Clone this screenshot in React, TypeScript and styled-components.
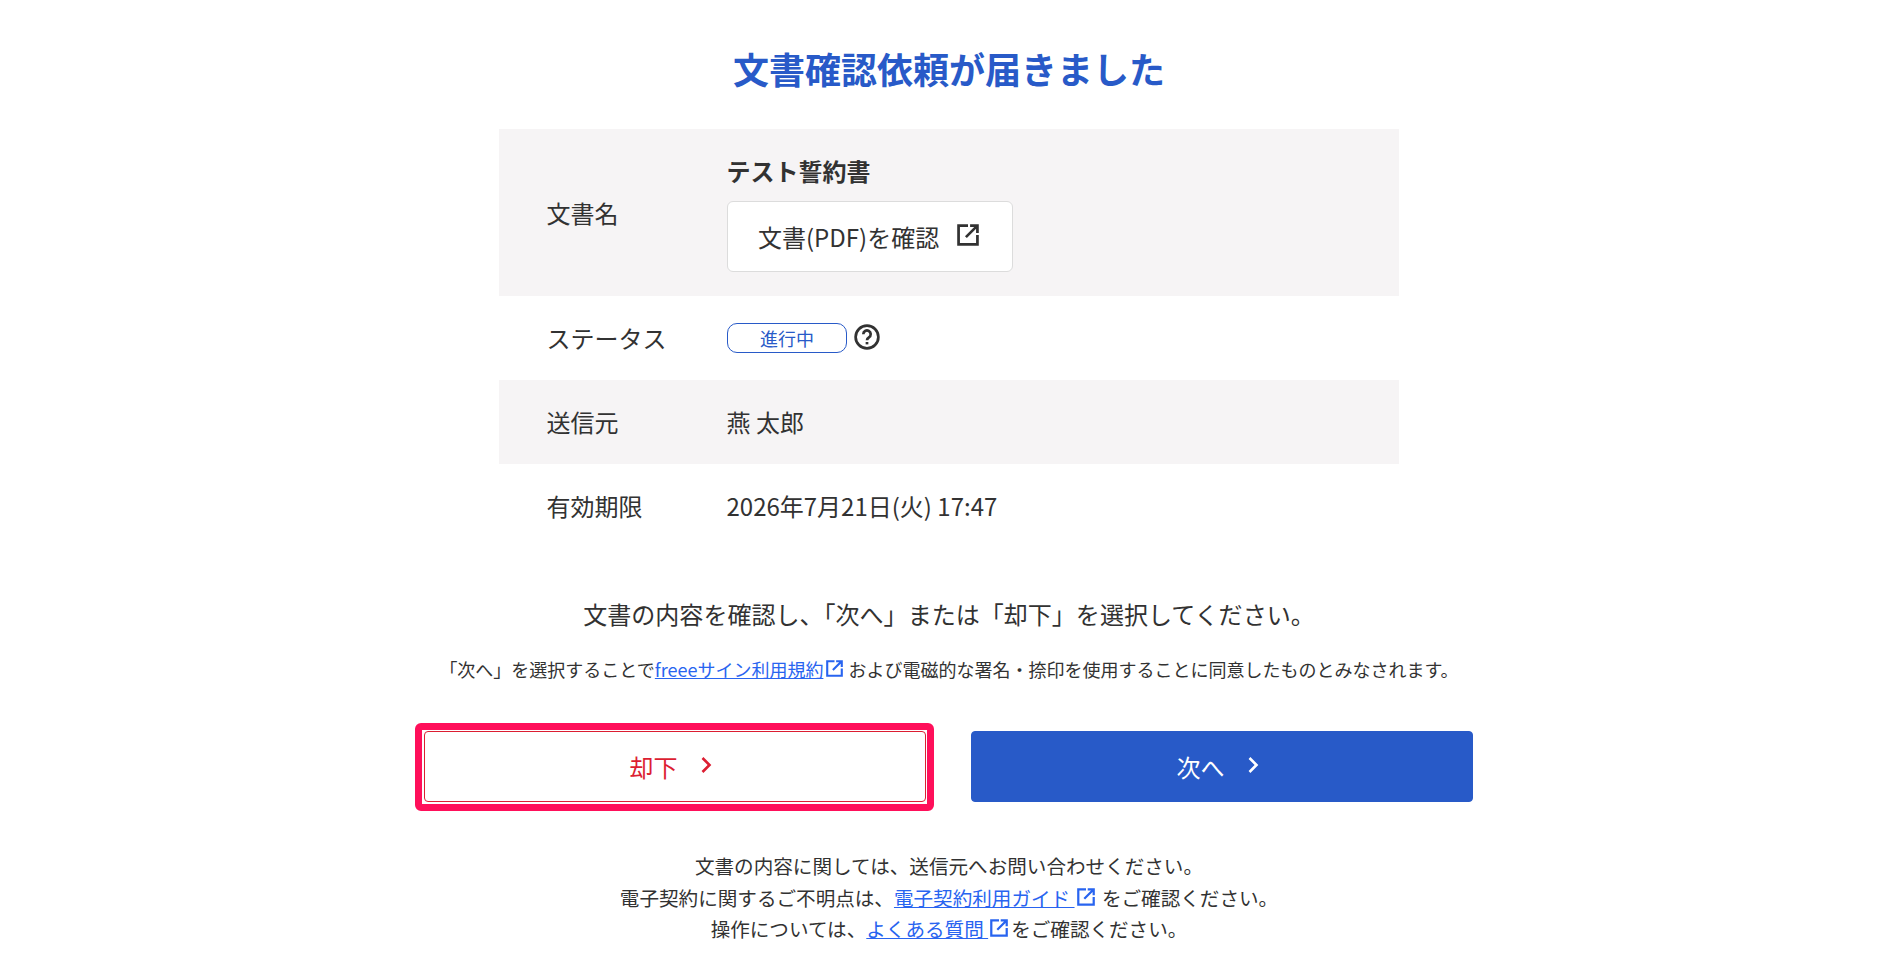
import React from 'react'
import styled, { createGlobalStyle } from 'styled-components'

const GlobalStyle = createGlobalStyle`
  html, body {
    margin: 0;
    background: #fff;
    color: #323232;
    font-family: "Noto Sans CJK JP", "Noto Sans", sans-serif;
  }
`

const Page = styled.main`
  padding: 41px 0 0 3px;
  display: flex;
  flex-direction: column;
  align-items: center;
`

const Title = styled.h1`
  margin: 0 0 34px;
  font-size: 36px;
  line-height: 54px;
  font-weight: 700;
  color: #285ac8;
`

const Table = styled.dl`
  width: 900px;
  margin: 0;
`

const Row = styled.div<{ $striped?: boolean }>`
  display: flex;
  align-items: center;
  min-height: 84px;
  padding: 0 47.5px;
  background: ${({ $striped }) => ($striped ? '#f6f4f5' : '#fff')};
`

const Label = styled.dt`
  width: 180px;
  flex: none;
  font-size: 24px;
  line-height: 36px;
`

const Value = styled.dd`
  margin: 0;
  display: flex;
  align-items: center;
  font-size: 24px;
  line-height: 36px;
`

const DocValue = styled(Value)`
  flex-direction: column;
  align-items: flex-start;
  padding: 24px 0;
`

const DocName = styled.div`
  font-weight: 700;
  margin-bottom: 12px;
`

const DocButton = styled.a`
  display: flex;
  align-items: center;
  gap: 18px;
  width: 286px;
  height: 71px;
  box-sizing: border-box;
  margin-left: 0.5px;
  padding-left: 30px;
  background: #fff;
  border: 1.2px solid #dcdcdc;
  border-radius: 6px;
  color: #323232;
`

const Badge = styled.span`
  display: flex;
  align-items: center;
  justify-content: center;
  width: 120px;
  height: 30px;
  box-sizing: border-box;
  margin-left: 0.5px;
  border: 1.2px solid #285ac8;
  border-radius: 10px;
  font-size: 18px;
  line-height: 1;
  color: #285ac8;
`

const HelpIcon = styled.svg`
  margin: 0 0 2px 7px;
  width: 26px;
  height: 26px;
`

const Lead = styled.p`
  margin: 48px 0 0;
  font-size: 24.04px;
  line-height: 36px;
`

const Notice = styled.p`
  margin: 24px 0 0;
  font-size: 18px;
  line-height: 27px;
  white-space: nowrap;
`

const Link = styled.a`
  color: #2864f0;
  text-decoration: underline;
`

const LinkIcon = styled.svg`
  width: 18px;
  height: 18px;
  vertical-align: 0;
  margin: 0 3px 0 2px;
  color: #2864f0;
`

const NoticeIcon = styled(LinkIcon)`
  width: 17px;
  height: 17px;
  margin: 0 5px 0 3px;
`

const DocIcon = styled(LinkIcon)`
  flex: none;
  width: 22px;
  height: 22px;
  margin: 0 0 3px;
  color: #323232;
`

const Actions = styled.div`
  display: flex;
  gap: 45px;
  margin: 48px 2px 0 0;
`

const ActionButton = styled.a<{ $primary?: boolean; $focused?: boolean }>`
  position: relative;
  width: 502px;
  height: 71px;
  box-sizing: border-box;
  display: flex;
  align-items: center;
  justify-content: center;
  gap: 22px;
  padding-right: 8px;
  font-size: 24px;
  border-radius: 4px;
  border: 1.2px solid ${({ $primary }) => ($primary ? '#285ac8' : '#dc1e32')};
  background: ${({ $primary }) => ($primary ? '#285ac8' : '#fff')};
  color: ${({ $primary }) => ($primary ? '#fff' : '#dc1e32')};
  ${({ $focused }) =>
    $focused
      ? `&::after {
           content: '';
           position: absolute;
           inset: -9.2px -9.2px -10px -10px;
           border: 7px solid #ff0f5a;
           border-radius: 6px;
         }`
      : ''}
`

const ChevronIcon = styled.svg`
  flex: none;
  width: 12px;
  height: 18px;
  margin-bottom: 3px;
`

const Help = styled.div`
  margin-top: 48px;
  font-size: 19.58px;
  line-height: 31.5px;
  text-align: center;
`

const ExternalIcon = ({ as: Comp = LinkIcon }: { as?: typeof LinkIcon }) => (
  <Comp viewBox="1.5 1.5 21 21" fill="none" stroke="currentColor" strokeWidth="2.6">
    <path d="M12 3H3v18h18v-9" />
    <path d="M10 14L20.5 3.5M14 3h7v7" />
  </Comp>
)

const Chevron = () => (
  <ChevronIcon viewBox="0 0 12 18" fill="none" stroke="currentColor" strokeWidth="2.6">
    <path d="M2.5 2l7 7-7 7" />
  </ChevronIcon>
)

export default function App() {
  return (
    <>
      <GlobalStyle />
      <Page>
        <Title>文書確認依頼が届きました</Title>
        <Table>
          <Row $striped>
            <Label>文書名</Label>
            <DocValue>
              <DocName>テスト誓約書</DocName>
              <DocButton>
                文書(PDF)を確認
                <ExternalIcon as={DocIcon} />
              </DocButton>
            </DocValue>
          </Row>
          <Row>
            <Label>ステータス</Label>
            <Value>
              <Badge>進行中</Badge>
              <HelpIcon viewBox="0 0 24 24" fill="none" stroke="#323232" strokeWidth="2.5">
                <circle cx="12" cy="12" r="10.5" />
                <path d="M8.6 9.4a3.4 3.4 0 1 1 5.2 2.9c-1.2.8-1.8 1.4-1.8 2.7" />
                <path d="M12 16.6v2.2" />
              </HelpIcon>
            </Value>
          </Row>
          <Row $striped>
            <Label>送信元</Label>
            <Value>燕 太郎</Value>
          </Row>
          <Row>
            <Label>有効期限</Label>
            <Value>2026年7月21日(火) 17:47</Value>
          </Row>
        </Table>
        <Lead>文書の内容を確認し、「次へ」または「却下」を選択してください。</Lead>
        <Notice>
          「次へ」を選択することで<Link>freeeサイン利用規約</Link>
          <ExternalIcon as={NoticeIcon} />
          および電磁的な署名・捺印を使用することに同意したものとみなされます。
        </Notice>
        <Actions>
          <ActionButton $focused>
            却下
            <Chevron />
          </ActionButton>
          <ActionButton $primary>
            次へ
            <Chevron />
          </ActionButton>
        </Actions>
        <Help>
          文書の内容に関しては、送信元へお問い合わせください。
          <br />
          電子契約に関するご不明点は、<Link>電子契約利用ガイド </Link>
          <ExternalIcon /> をご確認ください。
          <br />
          操作については、<Link>よくある質問 </Link>
          <ExternalIcon />をご確認ください。
        </Help>
      </Page>
    </>
  )
}
